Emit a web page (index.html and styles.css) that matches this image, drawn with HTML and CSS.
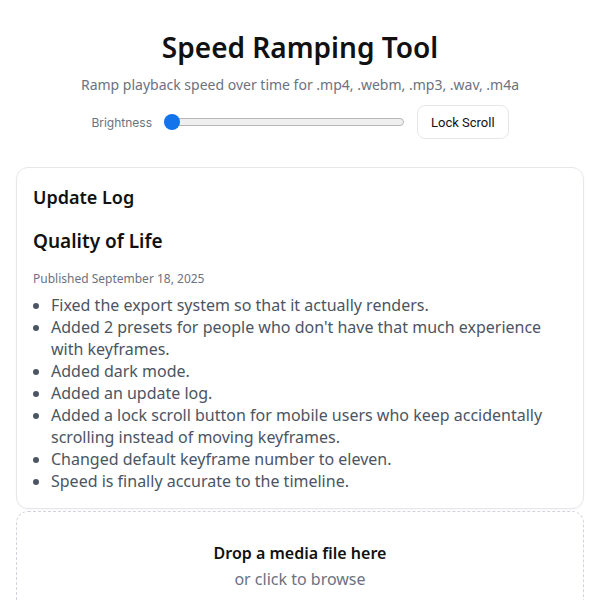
FILE: index.html
```html
<!DOCTYPE html>
<html>
<head>
<meta charset="utf-8">
<link rel="stylesheet" href="styles.css">
</head>
<body>
<div class="app">
  <header class="header">
    <h1 class="title">Speed Ramping Tool</h1>
    <p class="subtitle">Ramp playback speed over time for .mp4, .webm, .mp3, .wav, .m4a</p>
    <div class="controls">
      <label class="ctl-label">Brightness</label>
      <div class="slider"><span class="track"></span><span class="thumb"></span></div>
      <button class="btn">Lock Scroll</button>
    </div>
  </header>
  <section class="card">
    <h2 class="card-title">Update Log</h2>
    <h3 class="entry-title">Quality of Life</h3>
    <p class="meta">Published September 18, 2025</p>
    <ul class="list">
      <li>Fixed the export system so that it actually renders.</li>
      <li>Added 2 presets for people who don't have that much experience with keyframes.</li>
      <li>Added dark mode.</li>
      <li>Added an update log.</li>
      <li>Added a lock scroll button for mobile users who keep accidentally scrolling instead of moving keyframes.</li>
      <li>Changed default keyframe number to eleven.</li>
      <li>Speed is finally accurate to the timeline.</li>
    </ul>
  </section>
  <section class="drop">
    <div class="drop-title">Drop a media file here</div>
    <div class="drop-sub">or click to browse</div>
  </section>
</div>
</body>
</html>
```
FILE: styles.css
```css
* { box-sizing: border-box; }
html, body { margin: 0; padding: 0; background: #fff; }
body { font-family: "Noto Sans", sans-serif; color: #111; }
.app { padding: 0 16px; }
.header { display: flex; flex-direction: column; align-items: center; padding-top: 29px; }
.title { margin: 0; font-size: 28px; font-weight: 600; line-height: 36px; color: #111; }
.subtitle { margin: 10px 0 0; font-size: 14px; line-height: 20px; color: #6b7280; }
.controls { display: flex; align-items: center; gap: 12px; margin-top: 10px; }
.ctl-label { font-family: Inter, sans-serif; font-size: 12px; color: #6b7280; }
.slider { position: relative; width: 240px; height: 20px; display: flex; align-items: center; }
.track { display: block; width: 100%; height: 8px; border: 1px solid #b8b8b8; border-radius: 4px; background: #efefef; }
.thumb { position: absolute; left: 0; top: 2px; width: 16px; height: 16px; border-radius: 50%; background: #1273ea; }
.btn { font-family: Roboto, sans-serif; font-size: 13px; color: #111; background: #fff; border: 1px solid #e5e7eb; border-radius: 8px; padding: 0 13px; height: 34px; margin-left: 1px; }
.card { margin-top: 28px; border: 1px solid #e5e7eb; border-radius: 12px; padding: 16px 16px 16px; box-shadow: 0 1px 2px rgba(0,0,0,0.04); }
.card-title { margin: 0; font-size: 18px; font-weight: 600; line-height: 26px; }
.entry-title { margin: 17px 0 0; font-size: 19px; font-weight: 600; line-height: 28px; }
.meta { margin: 15px 0 0; font-size: 12px; line-height: 18px; color: #6b7280; }
.list { margin: 6px 0 0; padding-left: 18px; font-size: 16px; line-height: 22px; color: #4b5563; }
.drop { margin-top: 2px; border: 1px dashed #d1d5db; border-radius: 12px; padding: 29px 16px 31px; text-align: center; }
.drop-title { font-size: 16px; font-weight: 600; line-height: 24px; }
.drop-sub { margin-top: 2px; font-size: 16px; line-height: 24px; color: #6b7280; }
```
